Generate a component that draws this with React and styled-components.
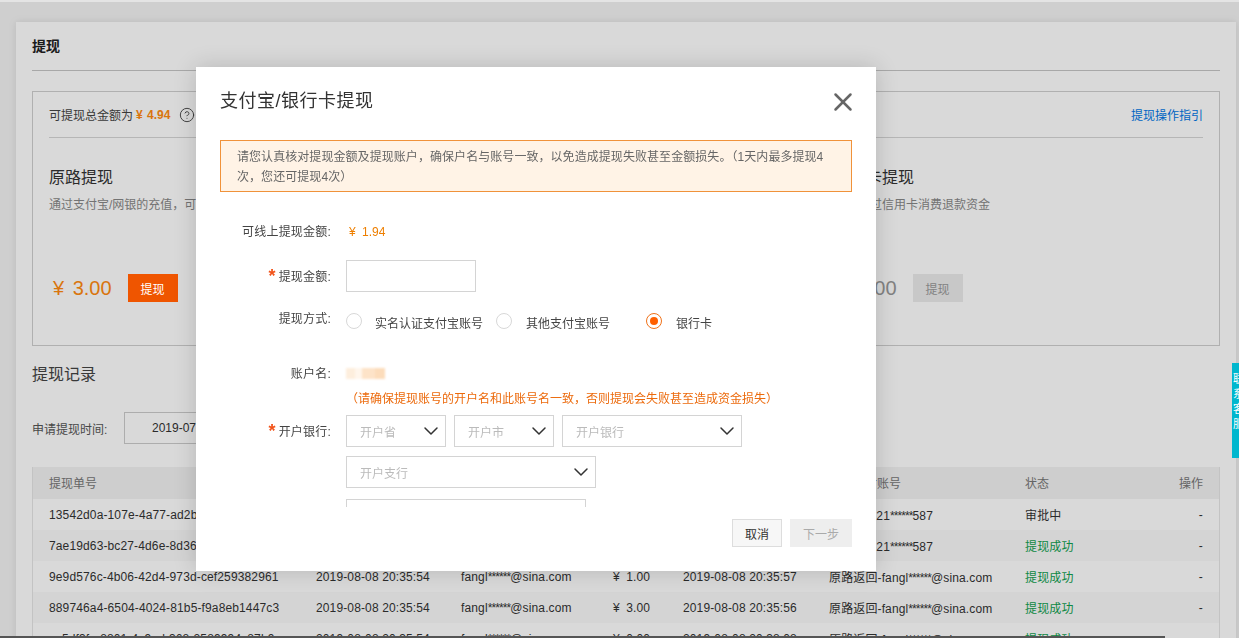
import React from "react";
import styled, { createGlobalStyle } from "styled-components";
import { X, ChevronDown, CircleHelp } from "lucide-react";

const Global = createGlobalStyle`
  html, body { margin: 0; padding: 0; height: 100%; overflow: hidden; background: #f4f4f4; }
  body { font-family: "Liberation Sans", "Noto Sans CJK SC", sans-serif; font-size: 12px; color: #333; }
  * { box-sizing: border-box; }
`;

const Page = styled.div`
  height: 638px;
  overflow: hidden;
  padding: 22px 3px 0 16px;
`;
const Card = styled.main`
  background: #fff;
  box-shadow: 0 0 8px rgba(0, 0, 0, 0.1);
  padding: 0 16px;
  height: 800px;
`;
const CardTitle = styled.h1`
  margin: 0;
  height: 49px;
  line-height: 48px;
  font-size: 14px;
  font-weight: 700;
  color: #222;
  border-bottom: 1px solid #c6c6c6;
`;
const Panel = styled.section`
  margin-top: 20px;
  height: 255px;
  border: 1px solid #cfcfcf;
  padding: 0 16px;
`;
const PanelHead = styled.div`
  height: 46px;
  display: flex;
  align-items: center;
  justify-content: space-between;
  border-bottom: 1px solid #d6d6d6;
  color: #444;
`;
const Total = styled.div`
  display: flex;
  align-items: center;
  gap: 3px;
`;
const TotalValue = styled.b`
  color: #ff8a10;
  font-size: 12px;
  font-weight: 700;
  word-spacing: 1px;
  margin-right: 6px;
`;
const Guide = styled.a`
  color: #0077e6;
`;
const Ways = styled.div`
  display: grid;
  grid-template-columns: 785px 1fr;
`;
const Way = styled.div`
  padding-top: 29px;
`;
const WayTitle = styled.div`
  font-size: 16px;
  line-height: 22px;
  color: #333;
`;
const WayDesc = styled.div`
  margin-top: 7px;
  line-height: 18px;
  color: #888;
  white-space: nowrap;
`;
const WayFoot = styled.div`
  margin-top: 60px;
  display: flex;
  align-items: center;
  gap: 16px;
  padding-left: 4px;
`;
const Amount = styled.span`
  font-size: 20px;
  line-height: 28px;
  word-spacing: 3px;
  color: ${(p) => (p.$off ? "#999" : "#ff8a10")};
`;
const WithdrawBtn = styled.button`
  position: relative;
  z-index: ${(p) => (p.disabled ? "auto" : 3)};
  width: 50px;
  height: 28px;
  border: 0;
  padding: 0;
  font: inherit;
  background: ${(p) => (p.disabled ? "#ebebeb" : "#ef5500")};
  color: ${(p) => (p.disabled ? "#999" : "#fff")};
`;
const SectionTitle = styled.h2`
  margin: 17px 0 0;
  font-size: 16px;
  font-weight: 400;
  line-height: 24px;
  color: #444;
`;
const Filter = styled.div`
  margin-top: 25px;
  display: flex;
  align-items: center;
  color: #555;
`;
const FilterLabel = styled.span`
  flex: 0 0 92px;
`;
const DateBox = styled.div`
  width: 360px;
  height: 32px;
  border: 1px solid #ccc;
  padding-left: 27px;
  line-height: 30px;
  color: #333;
`;
const Table = styled.div`
  margin-top: 23px;
  border-left: 1px solid #e6e6e6;
  border-right: 1px solid #e6e6e6;
`;
const Cols = styled.div`
  display: grid;
  grid-template-columns: 267px 145px 152px 70px 146px 196px 1fr auto;
  padding: 0 16px ${(p) => (p.$head ? "2px" : "0")};
  align-items: center;
  height: ${(p) => (p.$head ? "32px" : "31px")};
  background: ${(p) => (p.$head ? "#f2f2f2" : p.$alt ? "#fafafa" : "#fff")};
  color: ${(p) => (p.$head ? "#777" : "#333")};
  letter-spacing: ${(p) => (p.$head ? "0" : "0.13px")};
  white-space: nowrap;
`;
const MoneyCell = styled.span`
  word-spacing: 3px;
`;
const StatusCell = styled.span`
  color: ${(p) => (p.$ok ? "#12a150" : "#333")};
`;
const Mask = styled.span`
  letter-spacing: -0.9px;
`;

const SideTab = styled.aside`
  position: fixed;
  right: 0;
  top: 363px;
  width: 7px;
  height: 95px;
  background: #00b7ce;
  color: #fff;
  overflow: hidden;
  z-index: 5;
  font-size: 11px;
  line-height: 15px;
  padding-top: 9px;
  padding-left: 1px;
  white-space: pre-line;
`;
const TopStrip = styled.div`
  position: fixed;
  left: 0;
  top: 0;
  right: 0;
  height: 2px;
  background: #e4e4e4;
  z-index: 6;
`;
const BottomEdge = styled.div`
  position: fixed;
  left: 0;
  bottom: 0;
  width: 1165px;
  height: 2px;
  background: #555;
  z-index: 6;
`;
const Overlay = styled.div`
  position: fixed;
  inset: 0;
  background: rgba(0, 0, 0, 0.15);
  z-index: 2;
`;
const Modal = styled.div`
  position: fixed;
  left: 196px;
  top: 67px;
  width: 680px;
  height: 504px;
  background: #fff;
  box-shadow: 0 0 22px rgba(0, 0, 0, 0.16);
  z-index: 3;
  display: flex;
  flex-direction: column;
`;
const ModalHead = styled.div`
  height: 73px;
  padding: 0 24px;
  display: flex;
  justify-content: space-between;
`;
const ModalTitle = styled.div`
  margin-top: 21px;
  font-size: 18px;
  line-height: 26px;
  letter-spacing: 0.5px;
  color: #333;
`;
const Close = styled.div`
  margin: 20px -6px 0 0;
  width: 30px;
  height: 30px;
  color: #666;
`;
const ModalBody = styled.div`
  height: 367px;
  overflow: hidden;
  padding: 0 24px;
`;
const Alert = styled.div`
  height: 52px;
  padding: 6px 16px;
  background: #fff3e6;
  border: 1px solid #f0923a;
  line-height: 20px;
  letter-spacing: 0.06px;
  color: #666;
`;
const Row = styled.div`
  display: flex;
  align-items: ${(p) => (p.$start ? "flex-start" : "center")};
  margin-top: ${(p) => p.$mt}px;
  min-height: 20px;
`;
const Label = styled.label`
  flex: 0 0 111px;
  height: ${(p) => (p.$tall ? "32px" : "20px")};
  text-align: right;
  color: #444;
  line-height: ${(p) => (p.$tall ? "34px" : "22px")};
  letter-spacing: 0.2px;
  margin-right: 15px;
  white-space: nowrap;
  ${(p) => (p.$raise ? "margin-top: -5px;" : "")}
`;
const Star = styled.span`
  color: #f2541b;
  font-size: 18px;
  font-weight: 700;
  line-height: 12px;
  margin-right: 3px;
  vertical-align: -1px;
`;
const Money = styled.span`
  color: #ee7f00;
  padding: 2px 0 0 3px;
  word-spacing: 3px;
`;
const TextInput = styled.div`
  width: ${(p) => p.$w}px;
  height: 32px;
  border: 1px solid #d4d4d4;
  background: #fff;
`;
const Radios = styled.div`
  display: flex;
  align-items: center;
`;
const RadioItem = styled.div`
  display: flex;
  align-items: center;
  width: ${(p) => p.$w}px;
`;
const RadioDot = styled.span`
  flex: none;
  width: 16px;
  height: 16px;
  border-radius: 50%;
  border: 1px solid ${(p) => (p.$on ? "#f0721a" : "#d8d8d8")};
  display: flex;
  align-items: center;
  justify-content: center;
  &::after {
    content: "";
    width: 8px;
    height: 8px;
    border-radius: 50%;
    background: ${(p) => (p.$on ? "#ff6000" : "transparent")};
  }
`;
const RadioText = styled.span`
  margin: 7px 0 0 ${(p) => p.$gap || 13}px;
  line-height: 14px;
  color: #444;
  white-space: nowrap;
`;
const Mosaic = styled.div`
  width: 39px;
  height: 11px;
  margin-top: 1px;
  background: linear-gradient(90deg, #fdeedd 0 22%, #fff6ec 22% 40%, #fde3c8 40% 75%, #fcdcbb 75% 100%);
  filter: blur(0.8px);
`;
const Warn = styled.div`
  color: #ec6a0c;
  line-height: 22px;
  height: 20px;
  white-space: nowrap;
`;
const Selects = styled.div`
  display: flex;
  flex-wrap: wrap;
  gap: 9px 8px;
  width: 420px;
`;
const Select = styled.div`
  width: ${(p) => p.$w}px;
  height: 32px;
  border: 1px solid #d4d4d4;
  padding: 0 2px 0 13px;
  display: flex;
  align-items: center;
  justify-content: space-between;
  color: #bbb;
  svg { color: #333; margin-top: -1px; }
`;
const ModalFoot = styled.div`
  flex: 1;
  padding: 12px 24px 0;
  display: flex;
  justify-content: flex-end;
  align-items: flex-start;
  gap: 8px;
`;
const FootBtn = styled.button`
  height: 28px;
  width: ${(p) => p.$w}px;
  padding: 0;
  font: inherit;
  border: 1px solid ${(p) => (p.disabled ? "#eee" : "#ddd")};
  background: ${(p) => (p.disabled ? "#eeeeee" : "#f7f7f7")};
  color: ${(p) => (p.disabled ? "#aaa" : "#333")};
`;

const rows = [
  ["13542d0a-107e-4a77-ad2b-8e41c7d05f12", "2019-08-09 10:12:31", "fangl", "¥ 1.00", "-", "银行卡-6", "21", "审批中", false],
  ["7ae19d63-bc27-4d6e-8d36-1f7c24a9be05", "2019-08-08 21:02:18", "fangl", "¥ 1.00", "2019-08-08 21:05:40", "银行卡-6", "21", "提现成功", true],
  ["9e9d576c-4b06-42d4-973d-cef259382961", "2019-08-08 20:35:54", "fangl", "¥ 1.00", "2019-08-08 20:35:57", "原路返回-", "fangl", "提现成功", true],
  ["889746a4-6504-4024-81b5-f9a8eb1447c3", "2019-08-08 20:35:54", "fangl", "¥ 3.00", "2019-08-08 20:35:56", "原路返回-", "fangl", "提现成功", true],
  ["ac5df3fa-8801-4c9a-b368-2589994c87b9", "2019-08-08 20:35:54", "fangl", "¥ 0.00", "2019-08-08 20:38:08", "原路返回-", "fangl", "提现成功", true],
];

const Chevron = () => <ChevronDown size={24} strokeWidth={1.5} />;

export default function App() {
  return (
    <>
      <Global />
      <TopStrip />
      <Page>
        <Card>
          <CardTitle>提现</CardTitle>
          <Panel>
            <PanelHead>
              <Total>
                可提现总金额为 <TotalValue>¥ 4.94</TotalValue>
                <CircleHelp size={16} strokeWidth={1.4} />
              </Total>
              <Guide>提现操作指引</Guide>
            </PanelHead>
            <Ways>
              <Way>
                <WayTitle>原路提现</WayTitle>
                <WayDesc>通过支付宝/网银的充值，可原路退回到您的账户</WayDesc>
                <WayFoot>
                  <Amount>¥ 3.00</Amount>
                  <WithdrawBtn>提现</WithdrawBtn>
                </WayFoot>
              </Way>
              <Way>
                <WayTitle>银行卡提现</WayTitle>
                <WayDesc>可以通过信用卡消费退款资金</WayDesc>
                <WayFoot>
                  <Amount $off>¥ 0.00</Amount>
                  <WithdrawBtn disabled>提现</WithdrawBtn>
                </WayFoot>
              </Way>
            </Ways>
          </Panel>
          <SectionTitle>提现记录</SectionTitle>
          <Filter>
            <FilterLabel>申请提现时间:</FilterLabel>
            <DateBox>2019-07-09 ~ 2019-08-09</DateBox>
          </Filter>
          <Table>
            <Cols $head>
              <span>提现单号</span>
              <span>申请时间</span>
              <span>支付宝账号</span>
              <span>金额</span>
              <span>到账时间</span>
              <span>到账支付账号</span>
              <span>状态</span>
              <span>操作</span>
            </Cols>
            {rows.map((r, i) => (
              <Cols key={r[0]} $alt={i % 2 === 1}>
                <span>{r[0]}</span>
                <span>{r[1]}</span>
                <span>{r[2]}<Mask>******</Mask>@sina.com</span>
                <MoneyCell>{r[3]}</MoneyCell>
                <span>{r[4]}</span>
                <span>
                  {r[5]}{r[6]}<Mask>******</Mask>{r[6] === "21" ? "587" : "@sina.com"}
                </span>
                <StatusCell $ok={r[8]}>{r[7]}</StatusCell>
                <span>-</span>
              </Cols>
            ))}
          </Table>
        </Card>
      </Page>
      <SideTab>{"联\n系\n客\n服"}</SideTab>
      <Overlay />
      <Modal>
        <ModalHead>
          <ModalTitle>支付宝/银行卡提现</ModalTitle>
          <Close>
            <X size={30} strokeWidth={2} />
          </Close>
        </ModalHead>
        <ModalBody>
          <Alert>
            请您认真核对提现金额及提现账户，确保户名与账号一致，以免造成提现失败甚至金额损失。（1天内最多提现4次，您还可提现4次）
          </Alert>
          <Row $mt={29}>
            <Label>可线上提现金额:</Label>
            <Money>¥ 1.94</Money>
          </Row>
          <Row $mt={19}>
            <Label>
              <Star>*</Star>提现金额:
            </Label>
            <TextInput $w={130} />
          </Row>
          <Row $mt={18}>
            <Label $raise>提现方式:</Label>
            <Radios>
              <RadioItem $w={150}>
                <RadioDot />
                <RadioText>实名认证支付宝账号</RadioText>
              </RadioItem>
              <RadioItem $w={150}>
                <RadioDot />
                <RadioText $gap={14}>其他支付宝账号</RadioText>
              </RadioItem>
              <RadioItem $w={70}>
                <RadioDot $on />
                <RadioText $gap={14}>银行卡</RadioText>
              </RadioItem>
            </Radios>
          </Row>
          <Row $mt={32}>
            <Label>账户名:</Label>
            <Mosaic />
          </Row>
          <Row $mt={5}>
            <Label />
            <Warn>（请确保提现账号的开户名和此账号名一致，否则提现会失败甚至造成资金损失）</Warn>
          </Row>
          <Row $mt={7} $start>
            <Label $tall>
              <Star>*</Star>开户银行:
            </Label>
            <Selects>
              <Select $w={100}>开户省<Chevron /></Select>
              <Select $w={100}>开户市<Chevron /></Select>
              <Select $w={180}>开户银行<Chevron /></Select>
              <Select $w={250}>开户支行<Chevron /></Select>
            </Selects>
          </Row>
          <Row $mt={11}>
            <Label />
            <TextInput $w={240} />
          </Row>
        </ModalBody>
        <ModalFoot>
          <FootBtn $w={50}>取消</FootBtn>
          <FootBtn $w={62} disabled>下一步</FootBtn>
        </ModalFoot>
      </Modal>
      <BottomEdge />
    </>
  );
}
